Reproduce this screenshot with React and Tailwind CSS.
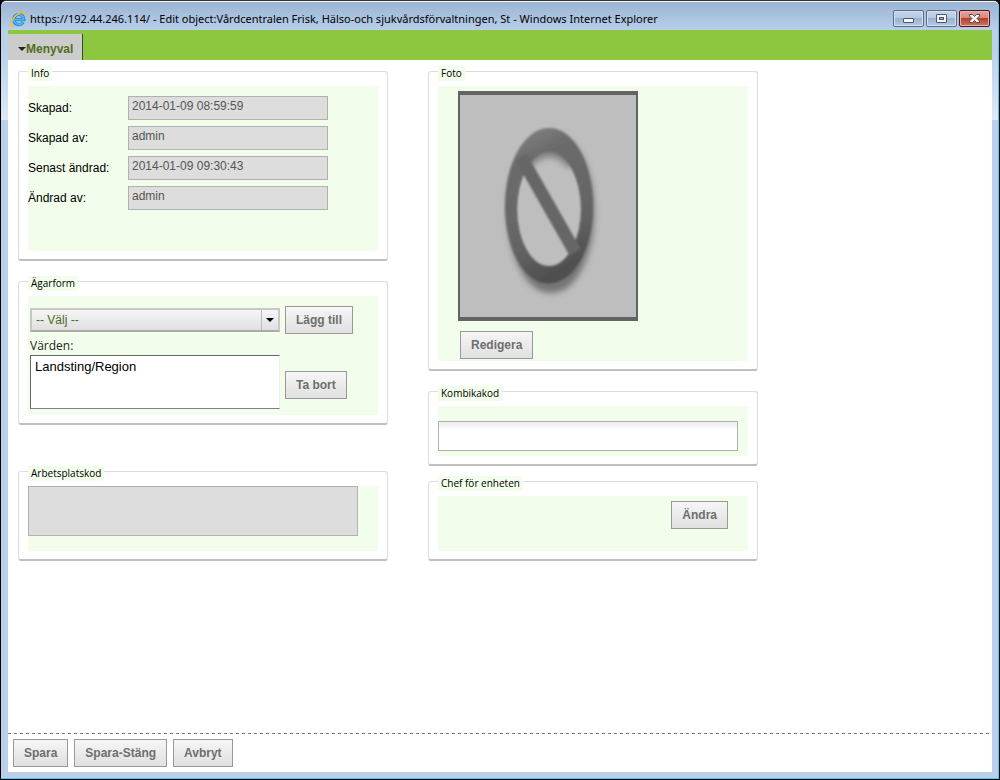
import { useState } from 'react'
import clsx from 'clsx'

const infoRows = [
  { id: 'created', label: 'Skapad:', value: '2014-01-09 08:59:59' },
  { id: 'created-by', label: 'Skapad av:', value: 'admin' },
  { id: 'changed', label: 'Senast ändrad:', value: '2014-01-09 09:30:43' },
  { id: 'changed-by', label: 'Ändrad av:', value: 'admin' }
]

const BrowserIcon = () => (
  <svg viewBox="0 0 16 16" className="size-4" aria-hidden="true">
    <path
      d="M13.200 11.200A5.100 5.100 0 1 1 13.900 8.600H4.500"
      fill="none"
      stroke="#1f7fcb"
      strokeWidth="3.200"
    />
    <path
      d="M13 11.200A5 5 0 1 1 13.800 8.600H4.500"
      fill="none"
      stroke="#4db8f2"
      strokeWidth="1.800"
    />
    <path
      d="M3.800 15C1.200 16-.4 14.500 1.100 11.200 2.800 7.300 7 2.900 11 1.300c3.400-1.300 4.600.1 3.700 2.700"
      fill="none"
      stroke="#f2bb35"
      strokeWidth="1.500"
      strokeLinecap="round"
    />
  </svg>
)

const CaptionButton = ({ label, danger, children }) => (
  <button
    type="button"
    aria-label={label}
    className={clsx(
      'flex h-[17px] w-[31px] items-center justify-center rounded-xs border',
      danger
        ? 'border-[#4b1420] bg-[linear-gradient(#e5a59c,#d98677_48%,#b93f2a_50%,#cf7560)] shadow-[inset_0_0_0_1px_#e9b3aa]'
        : 'border-[#5b6d8c] bg-[linear-gradient(#c3d5ea,#b4cae2_48%,#98b2cf_50%,#b3cae4)] shadow-[inset_0_0_0_1px_#d3e1f1]'
    )}
  >
    {children}
  </button>
)

const TitleBar = () => (
  <header className="flex h-7 items-center justify-between gap-4 pl-0.5 pr-0.5">
    <div className="flex min-w-0 items-center gap-1 pt-1.5">
      <BrowserIcon />
      <h1 className="truncate font-['Noto_Sans',sans-serif] text-[11px] leading-4 text-black">
        https://192.44.246.114/ - Edit object:Vårdcentralen Frisk, Hälso-och sjukvårdsförvaltningen, St - Windows Internet Explorer
      </h1>
    </div>
    <div className="flex shrink-0 gap-0.5 pt-1">
      <CaptionButton label="Minimera">
        <svg viewBox="0 0 11 9" className="h-[9px] w-[11px]">
          <rect x="0.5" y="4.5" width="10" height="4" rx="0.5" fill="#f6f6f6" stroke="#4d5566" />
        </svg>
      </CaptionButton>
      <CaptionButton label="Maximera">
        <svg viewBox="0 0 11 9" className="h-[9px] w-[11px]">
          <rect x="0.5" y="0.5" width="10" height="8" rx="0.5" fill="#f6f6f6" stroke="#4d5566" />
          <rect x="3.5" y="3.5" width="4" height="2" fill="#9db4d0" stroke="#4d5566" />
        </svg>
      </CaptionButton>
      <CaptionButton label="Stäng" danger>
        <svg viewBox="0 0 11 9" className="h-[9px] w-[11px]">
          <path
            d="M.5.5h3l2 2 2-2h3v1.500L8 4.500l2.500 2.500v1.500h-3l-2-2-2 2h-3V7L3 4.500.5 2z"
            fill="#f6f6f6"
            stroke="#4a4a5a"
          />
        </svg>
      </CaptionButton>
    </div>
  </header>
)

const Button = ({ children }) => (
  <button
    type="button"
    className="h-7 shrink-0 whitespace-nowrap border border-[#999] bg-linear-to-b from-[#f6f6f6] to-[#e0e0e0] px-2.5 text-xs font-bold text-[#6e6e6e]"
  >
    {children}
  </button>
)

const Panel = ({ title, className, children }) => (
  <section className="rounded-[3px] border border-b-2 border-[#ddd] border-b-[#bfbfbf] px-[9px] pb-2">
    {/* heading sits on top of the panel border */}
    <h2 className="-mt-1.5 mb-[5px] w-fit bg-[#f2fdeb] px-[3px] font-['Open_Sans',sans-serif] text-[10px] leading-[15px] text-black">
      {title}
    </h2>
    <div className={clsx('bg-[#f2fdeb]', className)}>{children}</div>
  </section>
)

const NoPhoto = () => (
  <svg viewBox="0 0 180 230" className="block h-[230px] w-[180px]" role="img" aria-label="Inget foto">
    <defs>
      <linearGradient id="ring" x1="0" y1="0" x2="0.3" y2="1">
        <stop offset="0%" stopColor="#8a8a8a" />
        <stop offset="25%" stopColor="#6c6c6c" />
        <stop offset="75%" stopColor="#646464" />
        <stop offset="100%" stopColor="#505050" />
      </linearGradient>
      <filter id="soft">
        <feGaussianBlur stdDeviation="1.3" />
      </filter>
      <filter id="shadow" x="-30%" y="-60%" width="160%" height="220%">
        <feGaussianBlur stdDeviation="3" />
      </filter>
      <filter id="edge">
        <feGaussianBlur stdDeviation="0.7" />
      </filter>
    </defs>
    <rect width="180" height="230" fill="#636363" />
    <rect x="2" y="4" width="176" height="222" fill="#bebebe" filter="url(#edge)" />
    <ellipse cx="93" cy="122" rx="37" ry="74" fill="none" stroke="#666" strokeWidth="12" opacity="0.85" filter="url(#shadow)" />
    <ellipse cx="91" cy="119" rx="33" ry="58" fill="#bebebe" filter="url(#soft)" />
    <path d="M64 78Q91 46 114 74" fill="none" stroke="#707070" strokeWidth="10" opacity="0.8" filter="url(#shadow)" />
    <g filter="url(#soft)">
      <path
        fillRule="evenodd"
        fill="url(#ring)"
        d="M91 37a44 78 0 0 1 0 156a44 78 0 0 1 0-156zM91 61a32 57 0 0 0 0 114a32 57 0 0 0 0-114z"
      />
      <path d="M63 66L117 161" stroke="#666" strokeWidth="13" />
    </g>
  </svg>
)

const InfoPanel = () => (
  <Panel title="Info" className="flex flex-col gap-1.5 pt-2.5 pb-[41px]">
    {infoRows.map(row => (
      <div key={row.id} className="flex items-center">
        <label htmlFor={row.id} className="w-[100px] text-xs text-black">
          {row.label}
        </label>
        <input
          id={row.id}
          readOnly
          value={row.value}
          className="h-6 w-[200px] border border-[#b0b0b0] bg-[#ddd] px-[3px] pb-1 text-xs text-[#555] outline-none"
        />
      </div>
    ))}
  </Panel>
)

const OwnershipPanel = () => {
  const [choice, setChoice] = useState('')

  return (
    <Panel title="Ägarform" className="pt-2.5 pb-1.5 pl-0.5">
      <div className="flex items-center gap-[5px]">
        <div className="relative w-[250px]">
          <select
            aria-label="Ägarform"
            value={choice}
            onChange={e => setChoice(e.target.value)}
            className="block h-6 w-full appearance-none border-2 border-[#c8c8c8] border-b-[#aaa] bg-linear-to-b from-[#f6f6f6] to-[#e0e0e0] pr-6 pl-1 text-xs text-[#4a6b1c] outline-none"
          >
            <option value="">-- Välj --</option>
            <option value="region">Landsting/Region</option>
          </select>
          <span className="pointer-events-none absolute inset-y-0.5 right-0.5 flex w-[17px] items-center justify-center border-l border-[#bbb]">
            <svg viewBox="0 0 8 4" className="h-1 w-2">
              <path d="M0 0h8L4 4z" fill="#000" />
            </svg>
          </span>
        </div>
        <Button>Lägg till</Button>
      </div>
      <label
        htmlFor="values"
        className="block pt-[3px] font-['Open_Sans',sans-serif] text-xs leading-[18px] text-[#222]"
      >
        Värden:
      </label>
      <div className="flex items-end gap-[5px]">
        <select
          id="values"
          multiple
          className="h-[54px] w-[250px] overflow-hidden border border-[#666] border-r-[#eee] border-b-[#7c7c8c] bg-white px-1 py-[3px] text-[13px] leading-4 text-black outline-none"
        >
          <option className="p-0">Landsting/Region</option>
        </select>
        <div className="pb-2.5">
          <Button>Ta bort</Button>
        </div>
      </div>
    </Panel>
  )
}

const PhotoPanel = () => (
  <Panel title="Foto" className="pt-[5px] pb-0.5 pl-5">
    <NoPhoto />
    <div className="pt-2.5 pl-0.5">
      <Button>Redigera</Button>
    </div>
  </Panel>
)

export default function App() {
  return (
    <div className="min-h-screen bg-black font-['Liberation_Sans',Arial,sans-serif]">
      <div className="flex min-h-screen flex-col rounded-t-md border border-black border-t-[#333] bg-[linear-gradient(#9ab3d3,#b8d0ea_30px,#b9d1ea_50px,#dde9f7_119px,#bad0ea_119px)] px-[7px] pt-px pb-[7px] shadow-[inset_0_1px_0_#f4f8fc,inset_-1px_-1px_0_#3fd0ee]">
        <TitleBar />

        <div className="flex grow flex-col bg-white">
          <nav className="flex h-[30px] items-end bg-[#8dc73f]">
            <button
              type="button"
              className="flex h-[26px] items-center border-r border-[#444] bg-[#ccc] pt-1 pr-[9px] pl-2.5 text-xs font-bold text-[#50701a]"
            >
              <svg viewBox="0 0 8 4" className="h-1 w-2">
                <path d="M0 0h8L4 4z" fill="#222" />
              </svg>
              Menyval
            </button>
          </nav>

          <main className="grid w-full max-w-[760px] grow grid-cols-[37fr_33fr] items-start gap-10 px-2.5 pt-[11px]">
            <div className="flex flex-col gap-5">
              <InfoPanel />
              <OwnershipPanel />
              <div className="pt-[26px]">
                <Panel title="Arbetsplatskod" className="pr-5 pb-[15px]">
                  <textarea
                    aria-label="Arbetsplatskod"
                    readOnly
                    className="block h-[50px] w-full resize-none border border-[#b0b0b0] bg-[#ddd] outline-none"
                  />
                </Panel>
              </div>
            </div>

            <div className="flex flex-col gap-5">
              <PhotoPanel />
              <div className="flex flex-col gap-[15px]">
                <Panel title="Kombikakod" className="pt-[15px] pr-2.5 pb-[5px]">
                  <input
                    aria-label="Kombikakod"
                    className="block h-[30px] w-full border border-[#b0b0b0] bg-linear-to-b from-[#eee] to-white to-30% px-1 text-xs outline-none"
                  />
                </Panel>
                <Panel title="Chef för enheten" className="flex justify-end pt-[5px] pr-5 pb-[22px]">
                  <Button>Ändra</Button>
                </Panel>
              </div>
            </div>
          </main>

          <footer>
            <div className="h-px bg-[repeating-linear-gradient(90deg,#777_0_3px,transparent_3px_6px)]" />
            <div className="flex gap-1.5 p-[5px]">
              <Button>Spara</Button>
              <Button>Spara-Stäng</Button>
              <Button>Avbryt</Button>
            </div>
          </footer>
        </div>
      </div>
    </div>
  )
}
